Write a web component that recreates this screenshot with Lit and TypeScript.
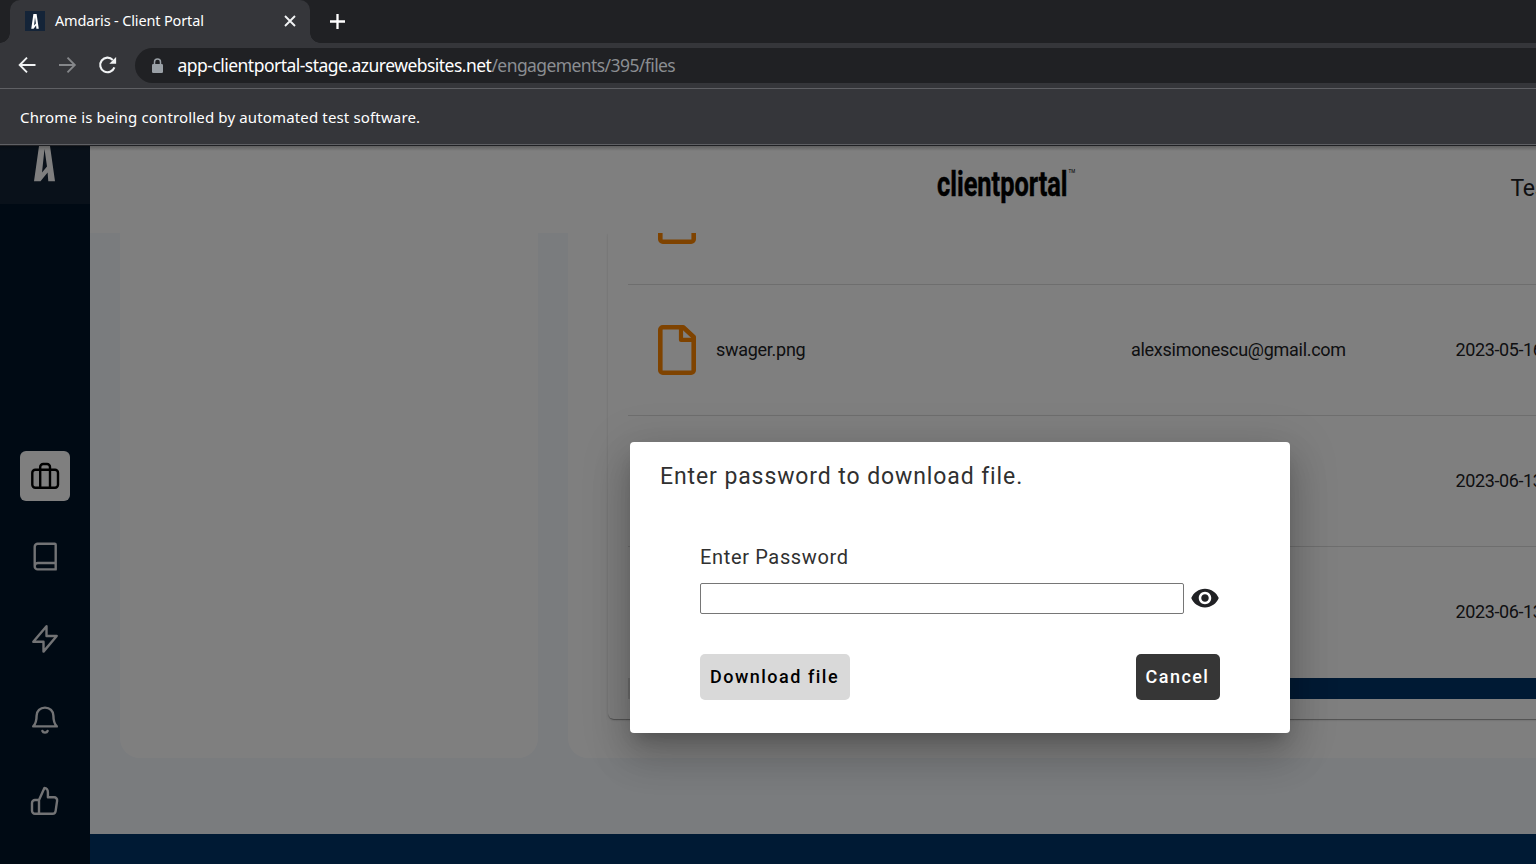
import { LitElement, html, css, svg } from "lit";
import { customElement } from "lit/decorators.js";

const sideIcons = [
  svg`<rect x="12.3" y="18.8" width="25.7" height="18" rx="3"/><path d="M20.2 36.7V16a3 3 0 0 1 3-3h3.8a3 3 0 0 1 3 3v20.7"/>`,
  svg`<path d="M14.7 34.3V14.8a3 3 0 0 1 3-3h17a1 1 0 0 1 1 1v24.6h-18a3 3 0 0 1-3-3.1 3.2 3.2 0 0 1 3-3.3h18"/>`,
  svg`<path d="M26.5 22V12.2L13.300 27.800h10.200v9.800L36.700 22z"/>`,
  svg`<path d="M13.2 31.4h23.6c-2.2-2.2-3.4-4.9-3.4-10.6 0-5-3.6-8.2-8.4-8.2s-8.4 3.2-8.4 8.2c0 5.7-1.2 8.4-3.4 10.6z"/><path d="M22.400 36a2.700 2.200 0 0 0 5.200 0"/>`,
  svg`<path d="M19 37.8V24h-4a3 3 0 0 0-3 3v7.800a3 3 0 0 0 3 3h17.600a3 3 0 0 0 3-2.600l1.500-10.400a3 3 0 0 0-3-3.500h-6.200v-4.800c0-3-1.300-4.500-3.500-4.500L19 24"/>`,
];

const rows = [
  { name: "", owner: "", date: "" },
  { name: "swager.png", owner: "alexsimonescu@gmail.com", date: "2023-05-16" },
  { name: "", owner: "", date: "2023-06-13" },
  { name: "", owner: "", date: "2023-06-13" },
];

const markPath = "M5 0H16L21 35.300H14.300L13.600 26.500 6.500 35.300H0ZM10.500 3L8 26.500 13 20.500Z";

@customElement("app-root")
export class AppRoot extends LitElement {
  static styles = css`
    :host { display: flex; flex-direction: column; width: 1536px; height: 864px; overflow: hidden; font-family: Roboto, sans-serif; color: #202124; }
    * { box-sizing: border-box; }
    svg { display: block; flex: none; }
    .strip { height: 43px; background: #202124; display: flex; flex: none; }
    .tab { position: relative; margin-left: 10px; width: 300px; background: #35363a; border-radius: 10px 10px 0 0; display: flex; align-items: center; padding: 0 13px 1px 15px; font: 14.5px "Noto Sans", sans-serif; color: #fff; }
    .tab::before, .tab::after { content: ""; position: absolute; bottom: 0; width: 10px; height: 10px; }
    .tab::before { left: -10px; background: radial-gradient(circle at 0 0, #202124 9.500px, #35363a 10px); }
    .tab::after { right: -10px; background: radial-gradient(circle at 100% 0, #202124 9.500px, #35363a 10px); }
    .fav { width: 20px; height: 20px; background: #142438; margin-right: 10px; display: flex; align-items: center; justify-content: center; }
    .tabname { flex: 1; white-space: nowrap; letter-spacing: -0.150px; padding-bottom: 2px; }
    .plus { margin: 13px 0 0 19px; }
    .bar { height: 45px; flex: none; background: #35363a; display: flex; align-items: center; padding-left: 17px; }
    .bar .nav { margin: 0 20px 1px 0; }
    .url { flex: 1; margin-left: -3.500px; height: 35px; background: #202124; border-radius: 18px 0 0 18px; display: flex; align-items: center; padding-left: 16px; font: 17.500px "Noto Sans", sans-serif; color: #fff; white-space: nowrap; }
    .host { margin-left: 14px; padding-bottom: 2px; letter-spacing: -0.525px; }
    .path { color: #8b8e92; padding-bottom: 2px; letter-spacing: -0.580px; }
    .info { height: 57px; flex: none; background: #35363a; border-top: 1px solid #5f6064; border-bottom: 1px solid #5f6064; display: flex; align-items: center; padding: 0 20px; font: 15px "Noto Sans", sans-serif; letter-spacing: 0.150px; color: #fff; white-space: nowrap; }
    .app { position: relative; flex: 1; display: flex; overflow: hidden; background: #f5f8fd; min-height: 0; }
    .side { width: 90px; flex: none; background: #001428; }
    .logo { height: 59px; background: #122234; display: flex; padding: 1px 0 0 34px; }
    .menu { display: flex; flex-direction: column; align-items: center; gap: 31.250px; padding-top: 247px; }
    .item { width: 50px; height: 50px; border-radius: 6px; color: #e4e6ea; }
    .item.on { background: #fff; color: #000; }
    .main { flex: 1; display: flex; flex-direction: column; min-width: 0; }
    .head { height: 88px; flex: none; background: #fff; display: flex; padding: 19px 0 0 845px; }
    .user { margin: 9px 0 0 430.500px; font-size: 23px; line-height: 32px; letter-spacing: -0.300px; white-space: nowrap; }
    .body { height: 601px; flex: none; display: flex; gap: 30px; padding-left: 30px; overflow: hidden; }
    .panel { width: 418px; height: 525px; flex: none; background: #fff; border-radius: 0 0 20px 20px; }
    .panel.wide { width: 1100px; padding-left: 40px; }
    .card { height: 486px; overflow: hidden; margin-right: -200px; border-radius: 0 0 6px 6px; box-shadow: 0 2px 1px -1px rgba(0,0,0,.2), 0 1px 1px rgba(0,0,0,.14), 0 1px 3px rgba(0,0,0,.12); padding-left: 20px; display: flex; flex-direction: column; }
    .clip { height: 486px; clip-path: inset(0 0 -6px -6px); }
    .rows { height: 445px; flex: none; display: flex; flex-direction: column; justify-content: flex-end; overflow: hidden; }
    .row { height: 131px; flex: none; display: grid; grid-template-columns: 38px 435px 324.500px 200px; align-items: center; padding-left: 30px; border-bottom: 1px solid #dcdcdc; font-size: 18px; letter-spacing: -0.280px; color: #202124; white-space: nowrap; }
    .row:last-child { border-bottom-color: transparent; }
    .row span { padding-bottom: 2px; }
    .row .name { padding-left: 20px; }
    .row .date { letter-spacing: -0.380px; }
    .scroll { height: 21px; flex: none; background: #dcdcdc; padding-left: 400px; }
    .thumb { height: 21px; background: #003468; }
    .foot { flex: 1; background: #003468; }
    .shade { position: absolute; inset: 0; background: rgba(0,0,0,.5); }
    .edge { position: absolute; left: 0; right: 0; top: 0; height: 6px; background: linear-gradient(#202124 0, #202124 1px, rgba(0,0,0,.25) 1px, rgba(0,0,0,0)); }
    .dialog { position: absolute; left: 630px; top: 297px; width: 660px; height: 291px; background: #fff; border-radius: 4px; padding: 19px 70px 0; box-shadow: 0 11px 15px -7px rgba(0,0,0,.2), 0 24px 38px 3px rgba(0,0,0,.14), 0 9px 46px 8px rgba(0,0,0,.12); }
    .title { margin-left: -40px; font-size: 23px; line-height: 32px; letter-spacing: 0.900px; white-space: nowrap; color: #303030; }
    .label { margin-top: 49px; font-size: 20px; line-height: 30px; letter-spacing: 0.650px; color: #303030; }
    .field { display: flex; align-items: center; margin-top: 11px; height: 31px; }
    .box { width: 484px; height: 31px; border: 1px solid #767676; border-radius: 2px; background: #fff; padding: 0; outline: none; display: block; }
    .eye { margin: 0 0 1px 6px; }
    .actions { display: flex; justify-content: space-between; margin-top: 40px; }
    .btn { height: 46px; border: 0; border-radius: 5px; font: 500 18px Roboto, sans-serif; letter-spacing: 1.500px; padding: 0 1px 2px 0; white-space: nowrap; text-align: center; }
    .get { width: 150px; background: #d9d9d9; color: #000; }
    .no { width: 84px; background: #363636; color: #fff; letter-spacing: 1.450px; }
  `;

  private fileIcon() {
    return html`<svg width="38" height="50" viewBox="0 0 38 50" fill="none" stroke="#ff8600" stroke-width="4.600" stroke-linejoin="round">
      <path d="M4.800 2.300H25.200L35.700 12V45.200a2.500 2.500 0 0 1-2.500 2.500H4.800a2.500 2.500 0 0 1-2.500-2.500V4.800a2.500 2.500 0 0 1 2.500-2.500z"/><path d="M23 2.500V14.900H35.500" stroke-width="4.200"/></svg>`;
  }

  render() {
    return html`
      <div class="strip">
        <div class="tab">
          <div class="fav"><svg width="8" height="15" viewBox="0 -6 21 42"><path fill="#fff" fill-rule="evenodd" d="M6 -6H15L21 35.300H14.300L13.600 26.500 6.500 35.300H0ZM10.500 3L8 26.500 13 20.500Z"/></svg></div>
          <span class="tabname">Amdaris - Client Portal</span>
          <svg width="14" height="14" viewBox="0 0 14 14" stroke="#f1f3f4" stroke-width="1.900"><path d="M2 2l10 10M12 2L2 12"/></svg>
        </div>
        <svg class="plus" width="17" height="17" viewBox="0 0 17 17" stroke="#fff" stroke-width="2.300"><path d="M8.500 1v15M1 8.500h15"/></svg>
      </div>
      <div class="bar">
        <svg class="nav" width="20" height="20" viewBox="0 0 20 20" fill="none" stroke="#f1f3f4" stroke-width="1.900"><path d="M18.500 10H3M10 2.700L2.700 10l7.300 7.300"/></svg>
        <svg class="nav" width="20" height="20" viewBox="0 0 20 20" fill="none" stroke="#85878a" stroke-width="1.900"><path d="M2 10h15.500M10.500 2.700l7.300 7.300-7.300 7.300"/></svg>
        <svg class="nav" width="21" height="20" viewBox="0 0 21 20" fill="none" stroke="#f1f3f4" stroke-width="2.100"><path d="M17.400 12.400A7.300 7.300 0 1 1 15.800 4.900"/><path d="M19.100 2v6.800h-6.800z" fill="#f1f3f4" stroke="none"/></svg>
        <div class="url">
          <svg width="13" height="16" viewBox="0 0 13 16"><rect x="1" y="6" width="11" height="9" rx="1.300" fill="#9aa0a6"/><path d="M3.500 6.500V4a3 3 0 0 1 6 0v2.500" fill="none" stroke="#9aa0a6" stroke-width="1.500"/></svg>
          <span class="host">app-clientportal-stage.azurewebsites.net</span><span class="path">/engagements/395/files</span>
        </div>
      </div>
      <div class="info">Chrome is being controlled by automated test software.</div>
      <div class="app">
        <div class="side">
          <div class="logo"><svg width="21" height="36" viewBox="0 0 21 36"><path fill="#fff" fill-rule="evenodd" d=${markPath} /></svg></div>
          <div class="menu">
            ${sideIcons.map((g, i) => html`<div class="item ${i === 0 ? "on" : ""}"><svg width="50" height="50" viewBox="0 0 50 50" fill="none" stroke="currentColor" stroke-width="2.400" stroke-linejoin="round" stroke-linecap="round">${g}</svg></div>`)}
          </div>
        </div>
        <div class="main">
          <div class="head">
            <svg width="145" height="48" viewBox="0 0 145 48" font-family="Roboto, sans-serif">
              <text x="2" y="32.200" font-size="35" font-weight="700" textLength="130.500" lengthAdjust="spacingAndGlyphs" stroke="#000" stroke-width="0.500">clientportal</text>
              <text x="133.500" y="9" font-size="4.500">TM</text>
            </svg>
            <div class="user">Test</div>
          </div>
          <div class="body">
            <div class="panel"></div>
            <div class="panel wide"><div class="clip"><div class="card">
              <div class="rows">
                ${rows.map(r => html`<div class="row">${this.fileIcon()}<span class="name">${r.name}</span><span class="mail">${r.owner}</span><span class="date">${r.date}</span></div>`)}
              </div>
              <div class="scroll"><div class="thumb"></div></div>
            </div></div></div>
          </div>
          <div class="foot"></div>
        </div>
        <div class="shade"></div>
        <div class="edge"></div>
        <div class="dialog">
          <div class="title">Enter password to download file.</div>
          <div class="label">Enter Password</div>
          <div class="field">
            <input class="box" type="password" />
            <svg class="eye" width="30" height="30" viewBox="0 0 24 24" fill="#202124"><path d="M12 4.500C7 4.500 2.730 7.610 1 12c1.730 4.390 6 7.500 11 7.500s9.270-3.110 11-7.500c-1.730-4.390-6-7.500-11-7.500zM12 17c-2.760 0-5-2.240-5-5s2.240-5 5-5 5 2.240 5 5-2.240 5-5 5zm0-8c-1.660 0-3 1.340-3 3s1.340 3 3 3 3-1.340 3-3-1.340-3-3-3z"/></svg>
          </div>
          <div class="actions">
            <button class="btn get">Download file</button>
            <button class="btn no">Cancel</button>
          </div>
        </div>
      </div>`;
  }
}
